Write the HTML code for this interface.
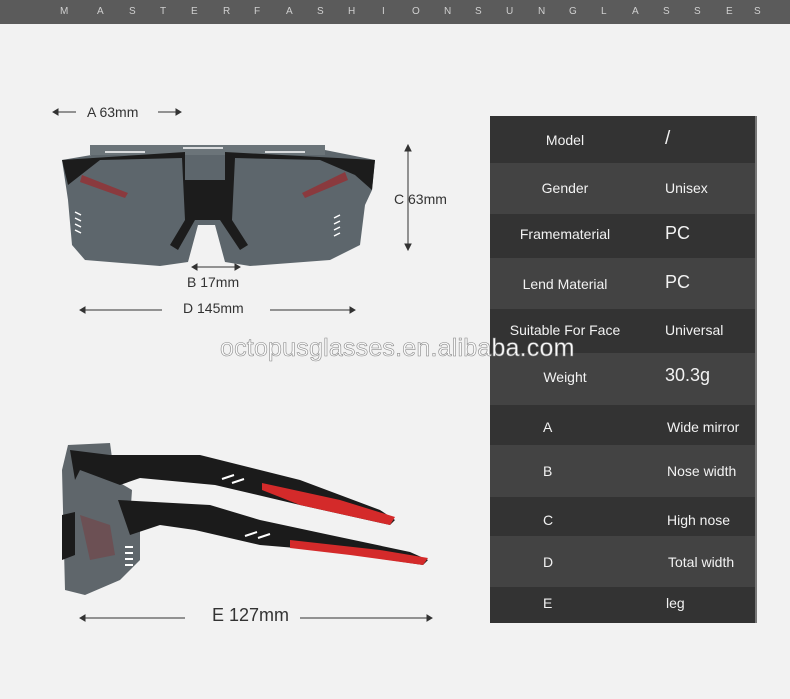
<!DOCTYPE html>
<html><head><meta charset="utf-8"><style>
body{margin:0;width:790px;height:699px;background:#f2f2f2;font-family:"Liberation Sans",sans-serif;position:relative;overflow:hidden}
.hdr{position:absolute;left:0;top:0;width:790px;height:24px;background:#5b5b5b;color:#d0d0d0;font-size:10px;line-height:24px}
.hdr span{position:absolute;top:0}
.tbl{position:absolute;left:490px;top:116px;width:265px;height:507px;border-right:2px solid #777}
.row{position:absolute;left:0;width:265px;color:#f2f2f2;font-size:14px}
.row .l{position:absolute;text-align:center;width:150px;left:0}
.row .r{position:absolute;left:175px}
.lbl{position:absolute;color:#333;font-size:14px}
.wm{position:absolute;left:220px;top:334px;font-size:25px;color:#fafafa;-webkit-text-stroke:0.6px #8a8a8a;letter-spacing:0.2px}
</style></head><body>
<div class="hdr">
<span style="left:60px">M</span><span style="left:97px">A</span><span style="left:129px">S</span><span style="left:160px">T</span><span style="left:191px">E</span><span style="left:223px">R</span><span style="left:254px">F</span><span style="left:286px">A</span><span style="left:317px">S</span><span style="left:348px">H</span><span style="left:382px">I</span><span style="left:412px">O</span><span style="left:444px">N</span><span style="left:475px">S</span><span style="left:506px">U</span><span style="left:538px">N</span><span style="left:569px">G</span><span style="left:601px">L</span><span style="left:632px">A</span><span style="left:663px">S</span><span style="left:694px">S</span><span style="left:726px">E</span><span style="left:754px">S</span>
</div>
<svg style="position:absolute;left:0;top:0" width="790" height="699">
<g stroke="#333" stroke-width="1" fill="#333">
<line x1="53" y1="112" x2="76" y2="112"/><path d="M53 112l5-3v6z"/>
<line x1="158" y1="112" x2="181" y2="112"/><path d="M181 112l-5-3v6z"/>
<line x1="408" y1="145" x2="408" y2="250"/><path d="M408 145l-3 6h6z M408 250l-3-6h6z"/>
<line x1="192" y1="267" x2="240" y2="267"/><path d="M192 267l5-3v6z M240 267l-5-3v6z"/>
<line x1="80" y1="310" x2="162" y2="310"/><path d="M80 310l5-3v6z"/>
<line x1="270" y1="310" x2="355" y2="310"/><path d="M355 310l-5-3v6z"/>
<line x1="80" y1="618" x2="185" y2="618"/><path d="M80 618l5-3v6z"/>
<line x1="300" y1="618" x2="432" y2="618"/><path d="M432 618l-5-3v6z"/>
</g>
<!-- front glasses -->
<path d="M62 160 L150 145 L300 145 L375 160 L372 190 L365 205 L360 245 L330 260 L250 266 L225 262 L215 225 L198 225 L188 262 L160 266 L85 260 L72 245 L68 200 Z" fill="#5d666c"/>
<path d="M90 145 L325 145 L325 155 L90 155Z" fill="#6b7479"/>
<path d="M62 160 L185 152 L185 180 L225 180 L225 152 L375 160 L372 190 L355 175 L320 160 L235 158 L232 220 L248 245 L240 250 L220 220 L195 220 L178 250 L170 245 L185 220 L182 158 L100 160 L68 185Z" fill="#1c1c1c"/>
<path d="M82 175 L128 193 L125 198 L80 182Z" fill="#8a3a3e"/>
<path d="M345 172 L302 193 L305 198 L348 180Z" fill="#8a3a3e"/>
<g stroke="#fff" stroke-width="1.5"><path d="M75 212l6 3M75 218l6 3M75 224l6 3M75 230l6 3M340 215l-6 3M340 221l-6 3M340 227l-6 3M340 233l-6 3"/><path d="M105 152h40M183 148h40M265 152h40"/></g>
<!-- side glasses -->
<path d="M68 445 L110 443 L115 480 L132 490 L130 520 L140 530 L140 560 L120 580 L85 595 L65 590 L62 470Z" fill="#5f666b"/>
<path d="M70 450 L110 455 L200 455 L300 480 L380 510 L395 520 L390 525 L300 505 L215 485 L140 478 L120 485 L80 470 L75 480Z" fill="#1b1b1b"/>
<path d="M262 483 L340 500 L395 517 L390 525 L300 505 L262 490Z" fill="#d42a2a"/>
<path d="M118 500 L210 505 L260 520 L330 535 L410 552 L428 560 L423 565 L320 550 L260 545 L195 530 L160 525 L130 535Z" fill="#1b1b1b"/>
<path d="M290 540 L380 550 L428 558 L423 565 L350 555 L290 548Z" fill="#d42a2a"/>
<path d="M62 515 L75 512 L75 555 L62 560Z" fill="#1b1b1b"/>
<path d="M80 515 L110 525 L115 555 L90 560Z" fill="#7a3a3e" opacity="0.5"/>
<g stroke="#fff" stroke-width="2"><path d="M222 479l12-4M232 483l12-4M245 536l12-4M258 538l12-4M125 547h8M125 553h8M125 559h8M125 565h8"/></g>
</svg>
<div class="lbl" style="left:87px;top:104px">A 63mm</div>
<div class="lbl" style="left:394px;top:191px">C 63mm</div>
<div class="lbl" style="left:187px;top:274px">B 17mm</div>
<div class="lbl" style="left:183px;top:300px">D 145mm</div>
<div class="lbl" style="left:212px;top:605px;font-size:18px">E 127mm</div>
<div class="tbl">
<div class="row" style="top:0;height:47px;background:#333"><span class="l" style="top:16px">Model</span><span class="r" style="top:12px;font-size:19px">/</span></div>
<div class="row" style="top:47px;height:51px;background:#434343"><span class="l" style="top:17px">Gender</span><span class="r" style="top:17px">Unisex</span></div>
<div class="row" style="top:98px;height:44px;background:#333"><span class="l" style="top:12px">Framematerial</span><span class="r" style="top:9px;font-size:18px">PC</span></div>
<div class="row" style="top:142px;height:51px;background:#434343"><span class="l" style="top:18px">Lend Material</span><span class="r" style="top:14px;font-size:18px">PC</span></div>
<div class="row" style="top:193px;height:44px;background:#333"><span class="l" style="top:13px">Suitable For Face</span><span class="r" style="top:13px">Universal</span></div>
<div class="row" style="top:237px;height:52px;background:#434343"><span class="l" style="top:16px">Weight</span><span class="r" style="top:12px;font-size:18px">30.3g</span></div>
<div class="row" style="top:289px;height:40px;background:#333"><span class="l" style="top:14px;left:53px;width:auto">A</span><span class="r" style="top:14px;left:177px">Wide mirror</span></div>
<div class="row" style="top:329px;height:52px;background:#434343"><span class="l" style="top:18px;left:53px;width:auto">B</span><span class="r" style="top:18px;left:177px">Nose width</span></div>
<div class="row" style="top:381px;height:39px;background:#333"><span class="l" style="top:15px;left:53px;width:auto">C</span><span class="r" style="top:15px;left:177px">High nose</span></div>
<div class="row" style="top:420px;height:51px;background:#434343"><span class="l" style="top:18px;left:53px;width:auto">D</span><span class="r" style="top:18px;left:178px">Total width</span></div>
<div class="row" style="top:471px;height:36px;background:#333"><span class="l" style="top:8px;left:53px;width:auto">E</span><span class="r" style="top:8px;left:176px">leg</span></div>
</div>
<div class="wm">octopusglasses.en.alibaba.com</div>
</body></html>
